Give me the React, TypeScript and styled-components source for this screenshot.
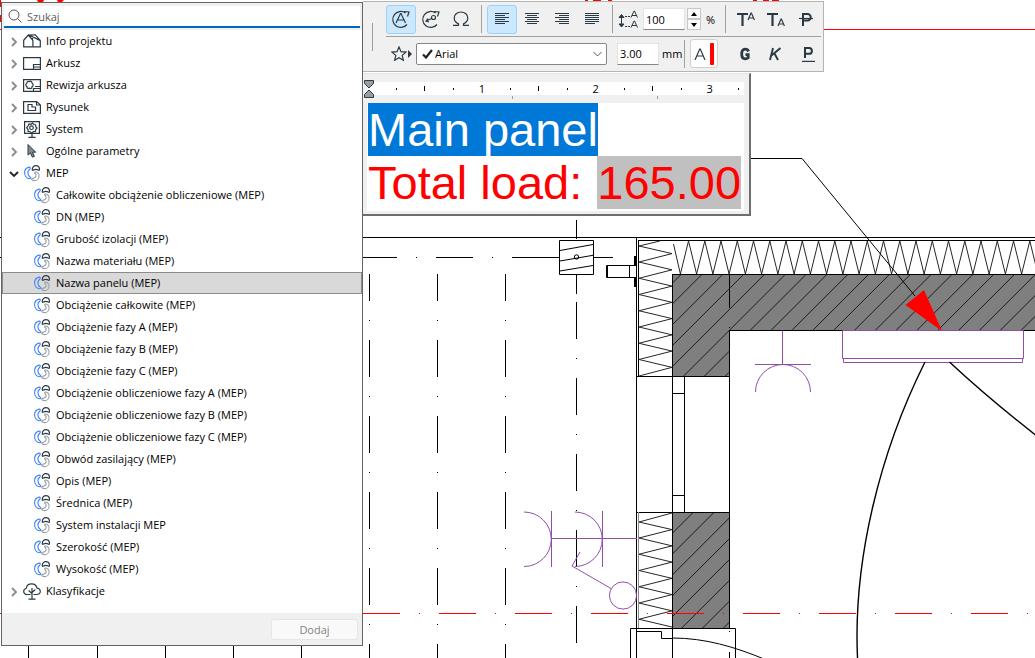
import React from "react";
import styled, { createGlobalStyle, css } from "styled-components";

const GlobalStyle = createGlobalStyle`
  *, *::before, *::after { box-sizing: border-box; }
  body {
    margin: 0;
    background: #ffffff;
    color: #000000;
    font-family: "Open Sans", "Noto Sans", sans-serif;
    font-size: 11px;
  }
  button, input, select { font: inherit; color: inherit; margin: 0; }
`;

/* ---------- page ---------- */

const Workspace = styled.main`
  position: relative;
  display: flex;
  align-items: flex-start;
  min-height: 100vh;
  padding: 1px;
  overflow: hidden;
`;

const PlanCanvas = styled.svg`
  position: absolute;
  inset: 0;
  width: 100%;
  height: 100%;
`;

const Palettes = styled.div`
  position: relative;
  display: flex;
  flex-direction: column;
  align-items: flex-start;
  gap: 1px;
`;

/* ---------- parameter browser ---------- */

const Browser = styled.section`
  position: relative;
  flex: none;
  width: 362px;
  margin-top: 1px;
  border: 1px solid #646464;
  background: #ffffff;
`;

const SearchBar = styled.div`
  padding: 3px 2px 2px;
  background: #f0f0f0;
`;

const SearchBox = styled.label`
  display: flex;
  align-items: center;
  gap: 5px;
  height: 22px;
  padding-left: 4px;
  border-bottom: 2px solid #0067c0;
  background: #ffffff;
`;

const SearchInput = styled.input`
  flex: 1;
  min-width: 0;
  padding: 0;
  border: 0;
  outline: 0;
  background: transparent;
  &::placeholder { color: #5c5c5c; opacity: 1; }
`;

const Tree = styled.ul`
  margin: 0;
  padding: 0 0 11px;
  list-style: none;
`;

const Branch = styled.ul`
  margin: 0;
  padding: 0;
  list-style: none;
`;

const Row = styled.button<{ $child?: boolean; $selected?: boolean }>`
  display: flex;
  align-items: center;
  width: 100%;
  height: 22px;
  padding: 0 0 2px ${(p) => (p.$child ? 32 : 4)}px;
  border: 0;
  background: transparent;
  text-align: left;
  white-space: nowrap;
  ${(p) =>
    p.$selected &&
    css`
      background: #d9d9d9;
      box-shadow: inset 0 0 0 1px #8c8c8c;
    `}
`;

const ChevronSlot = styled.span`
  display: flex;
  justify-content: center;
  width: 15px;
  margin-right: 2px;
  padding-top: 4px;
`;

const IconSlot = styled.span<{ $child?: boolean }>`
  display: flex;
  justify-content: center;
  width: ${(p) => (p.$child ? 16 : 18)}px;
  margin-right: ${(p) => (p.$child ? 6 : 5)}px;
  padding-top: 3px;
`;

const Footer = styled.footer`
  display: flex;
  justify-content: flex-end;
  padding: 6px 4px 5px;
  background: #f0f0f0;
`;

const AddButton = styled.button`
  width: 87px;
  height: 21px;
  padding: 0;
  border: 1px solid #e6e6e6;
  border-radius: 3px;
  background: #f9f9f9;
  &:disabled { color: #838383; }
`;

/* ---------- text toolbar ---------- */

const Toolbar = styled.section`
  display: flex;
  align-items: stretch;
  padding-right: 2px;
  border: 1px solid #b4b4b4;
  border-left: 0;
  background: #f0f0f0;
`;

const Grip = styled.div`
  width: 1px;
  margin: 21px 13px 20px 9px;
  background: #a0a0a0;
`;

const ToolRows = styled.div``;

const ToolRow = styled.div`
  display: flex;
  align-items: center;
  height: 34px;
  & + & {
    height: 35px;
    padding-bottom: 1px;
    border-top: 1px solid #a0a0a0;
  }
`;

const ToolButton = styled.button<{ $active?: boolean }>`
  display: flex;
  align-items: center;
  justify-content: center;
  width: 30px;
  height: 29px;
  padding: 0;
  border: 1px solid ${(p) => (p.$active ? "#99d1ff" : "transparent")};
  border-radius: 3px;
  background: ${(p) => (p.$active ? "#cce8ff" : "transparent")};
`;

const ColorButton = styled(ToolButton)`
  width: 28px;
  gap: 4px;
  margin-right: 12px;
  border-color: #d0d0d0;
  background: #fdfdfd;
`;

const Divider = styled.div`
  width: 1px;
  height: 28px;
  margin: 0 5px;
  background: #a0a0a0;
`;

const NumberField = styled.input`
  width: 42px;
  height: 22px;
  padding: 0 0 0 2px;
  border: 1px solid #e3e3e3;
  border-bottom-color: #868686;
  background: #ffffff;
  outline: 0;
`;

const Spinner = styled.div`
  display: flex;
  flex-direction: column;
  margin: 0 5px 0 2px;
`;

const SpinButton = styled.button`
  display: flex;
  align-items: center;
  justify-content: center;
  width: 14px;
  height: 11px;
  padding: 0;
  border: 1px solid #c8c8c8;
  background: #fbfbfb;
`;

const Unit = styled.span<{ $width: number; $gap?: number }>`
  width: ${(p) => p.$width}px;
  margin-left: ${(p) => p.$gap ?? 0}px;
`;

const FavoriteButton = styled(ToolButton)`
  gap: 1px;
`;

const FontPicker = styled.label`
  display: flex;
  align-items: center;
  gap: 2px;
  width: 191px;
  height: 22px;
  margin-right: 10px;
  padding: 0 4px 0 5px;
  border: 1px solid #868686;
  border-radius: 2px;
  background: #ffffff;
`;

const FontSelect = styled.select`
  flex: 1;
  min-width: 0;
  padding: 0;
  border: 0;
  outline: 0;
  appearance: none;
  background: transparent;
`;

/* ---------- text editor ---------- */

const Editor = styled.section`
  width: 388px;
  padding: 8px 5px 3px 4px;
  border-top: 1px solid #e4e4e4;
  border-right: 2px solid #6e6e6e;
  border-bottom: 2px solid #6e6e6e;
  background: #f0f0f0;
`;

const Ruler = styled.div`
  display: flex;
  height: 13px;
  padding-right: 6px;
  background: #ffffff;
`;

const RulerStep = styled.div`
  display: flex;
  flex: 1;
  align-items: center;
  justify-content: flex-end;
`;

const RulerMark = styled.span`
  display: flex;
  justify-content: center;
  width: 8px;
  margin-right: -4px;
  line-height: 13px;
`;

const Tick = styled.i<{ $tall?: boolean }>`
  width: 1px;
  height: ${(p) => (p.$tall ? 5 : 2)}px;
  background: #000000;
`;

const IndentMarker = styled.svg`
  flex: none;
  align-self: center;
  margin: 0 -6px 0 -3px;
  overflow: visible;
`;

const TabStops = styled.div`
  display: flex;
  gap: 144px;
  height: 8px;
  padding: 1px 0 0 145px;
`;

const TabStop = styled.i`
  width: 1px;
  height: 3px;
  background: #a0a0a0;
`;

const TextArea = styled.div`
  padding: 0 1px 2px;
  background: #ffffff;
  color: #ff0000;
  font-family: "Liberation Sans", Arial, sans-serif;
  font-size: 47px;
  line-height: 53px;
  white-space: pre;
  outline: 0;
`;

const TextLine = styled.div`
  display: flex;
  gap: 2px;
  height: 53px;
`;

const Selected = styled.span`
  background: #0078d7;
  color: #ffffff;
`;

const Autotext = styled.span`
  background: #c0c0c0;
`;

/* ---------- icons ---------- */

const INK = "#2b3a42";

const Svg = ({ w, h, children }: { w: number; h: number; children: React.ReactNode }) => (
  <svg width={w} height={h} viewBox={`0 0 ${w} ${h}`} fill="none" stroke={INK} strokeWidth="1.2" aria-hidden="true">
    {children}
  </svg>
);

const Chevron = ({ open }: { open?: boolean }) =>
  open ? (
    <Svg w={10} h={8}><path d="M1 2l4 4 4-4" stroke="#222" strokeWidth="1.8" /></Svg>
  ) : (
    <Svg w={8} h={10}><path d="M2 1l4 4-4 4" stroke="#8a8a8a" strokeWidth="1.8" /></Svg>
  );

const MepIcon = () => (
  <Svg w={16} h={17}>
    <path d="M5.300 2.100C2.500 2.600.6 5 .6 7.800c0 3.200 2.200 5.700 5.100 5.900 1.200.1 1.400-1 .6-1.500C4.800 11.300 3.900 9.900 3.900 8.100c0-1.600.8-3 1.900-4.100.9-.8.5-2.100-.5-1.900z" stroke="#3f85f5" strokeWidth="1.100" />
    <path d="M8.200 4.700C8.500 2.300 9.900.7 11.900.7s3.500 1.500 3.700 3.900c0 .7-.8.9-1.300.5-1.500-.9-3.300-.9-4.800 0-.6.4-1.300.2-1.300-.4z" strokeWidth="1.200" />
    <path d="M11.100 7c2.200-.2 4 1.600 4 3.900 0 2.600-2 4.700-4.500 4.700-1.200 0-2.100-.4-2.800-1.100-.4-.5 0-1.100.6-1.100 2-.1 3.700-1.300 3.700-3.100 0-.9-.5-1.500-1.200-2-.5-.5-.4-1.200.2-1.300z" stroke="#9aa1a5" strokeWidth="1.100" />
  </Svg>
);

const icons: Record<string, React.ReactNode> = {
  project: (
    <Svg w={18} h={15}><path d="M.7 12.800V6.300L5.300 1l4.600 5.300v6.500zM5.300 1l7-.1 5 5.600v6.300H9.900M6 1l10.800 5.400M9.500 2.700v3.300" /></Svg>
  ),
  sheet: (
    <Svg w={18} h={13}><path d="M.6.6h16.800v11.800H.6zM10.500 12.400V7.500h6.900M10.500 10h6.900" /></Svg>
  ),
  revision: (
    <Svg w={18} h={13}><path d="M.6.6h16.800v11.800H.6zM10.500 12.400V9.500h6.900M12 7.500h5.400" /><path d="M4 4c0-1.500 1.400-2 2.200-1.300C7.200 1.700 9 2.300 9 4c1.500.8 1.500 3 0 3.700.2 1.700-1.600 2.400-2.700 1.400C5.200 10 3.700 9 4 7.600 2.500 6.900 2.500 4.800 4 4z" /></Svg>
  ),
  drawing: (
    <Svg w={18} h={13}><path d="M.6.6h13l3.800 3.300v8.500H.6zM13.500.6v3.400h3.900M5 3.500h4v2.500h3.500v3.500H5z" /></Svg>
  ),
  system: (
    <Svg w={18} h={17}><path d="M1.600.6h14.800v11.800H1.600zM9 12.400v3.800M5.500 16.300h7" /><circle cx="8.500" cy="6.700" r="1.800" /><path d="M5 5l1-2 2 .3L9.500 2l1.500 1.500L12.700 4l.1 2L14 7l-1.300 1.500-.2 2-2 .1L8.700 12 7 10.700l-2-.4v-2L3.700 6.800z" /></Svg>
  ),
  pointer: (
    <Svg w={18} h={17}><path d="M5 1.500v10.600l2.400-2.200 2 4.300 2-.9-2-4.100h3.300z" fill="#85898c" strokeWidth="1" /></Svg>
  ),
  mep: <MepIcon />,
  classes: (
    <Svg w={18} h={17}><path d="M4.500 11.500C2.300 11.800.7 10.400.7 8.500c0-1.700 1-2.800 2.500-3C3.500 2.600 5.900.8 8.700.8c2.700 0 4.800 1.600 5.300 4.300 1.900.2 3.300 1.600 3.300 3.400 0 2-1.700 3.200-4 3M4.500 11.500h3M10.500 11.500h3M9 5v11M5.500 16.200h7M5.600 7.500L9 10.500M12.300 6.500L9 9.500" /></Svg>
  ),
};

const AlignIcon = ({ mode }: { mode: "left" | "center" | "right" | "justify" }) => (
  <Svg w={14} h={12}>
    {[0, 2, 4, 6, 8, 10].map((y, i) => {
      const full = mode === "justify" ? i < 5 : i % 2 === 0;
      const len = full ? 14 : 10;
      const x = mode === "center" ? (14 - len) / 2 : mode === "right" ? 14 - len : 0;
      return <rect key={y} x={x} y={y} width={len} height="1" fill={INK} stroke="none" />;
    })}
  </Svg>
);

/* ---------- floor plan ---------- */

const range = (n: number) => Array.from({ length: n }, (_, i) => i);
const PURPLE = "#8f4fa8";

/* Dash-dot axis: a 37px dash, then a dot in the middle of a 39px gap. */
const AXIS = "37 19 1 19";

const zigzagUp = range(24)
  .map((i) => `L${(680.4 + i * 16.25).toFixed(1)} 274L${(688.5 + i * 16.25).toFixed(1)} 241`)
  .join("");
const zigzagSide = (top: number, n: number) =>
  range(n).map((i) => `L672 ${top + 7.6 + i * 16.25}L639 ${top + 16 + i * 16.25}`).join("");

const Plan = () => (
  <PlanCanvas aria-hidden="true" fill="none" stroke="#000" strokeWidth="1">
    <defs>
      <clipPath id="walls">
        <path d="M672 274H1400V331H730V376H672zM672 512H730V628H672z" />
      </clipPath>
    </defs>

    <g fill="#f00" stroke="none">
      <path d="M0 0h1v7H0zM0 15h1v7H0zM0 29h1v1H0zM37 0h7l-1 2h-5zM57 0h7l-2 2h-4zM585 0h3v1h-3zM593 0h8v1h-8zM608 0h4v1h-4zM753 0h4v1h-4zM763 0h6v1h-6zM772 0h7v1h-7z" />
    </g>
    <path d="M823 29.500H1400" stroke="#f00" />

    <path d="M0 237.500H1400M0 257.500H1M638 240.500H1400" />
    <path d="M360 257.500H397M416 257.500h1M436 257.500H473M492 257.500h1M512 257.500H559M594 257.500H613" />
    {[369.5, 437.5, 505.5].map((x) => (
      <path key={x} d={`M${x} 264V1200`} strokeDasharray={AXIS} />
    ))}
    <path d="M360 264H520V274H360z" fill="#fff" stroke="none" />
    <path d="M576.500 220V239M576.500 275V294M576.500 302V644" strokeDasharray={AXIS} />
    {[28.5, 97.5, 165.5, 233.5, 301.5].map((x) => (
      <path key={x} d={`M${x} 640V658`} />
    ))}

    <path d="M559.500 240.500h34v34h-34z" fill="#fff" />
    <path d="M560 250.500L593 244.500M560 261L593 255.300M560 271L593 265.500" />
    <circle cx="576.500" cy="257" r="2.200" />
    <path d="M636 265.500H606.500V277.500H636M607.500 265V278M629.500 265V278" />
    <path d="M634 256h3v10h-3zM634 278h3v9h-3z" fill="#000" stroke="none" />

    <g clipPath="url(#walls)">
      <path d="M672 274H1400V331H730V376H672zM672 512H730V628H672z" fill="#7f7f7f" stroke="none" />
      {range(46).map((i) => {
        const sum = 955.5 + i * 20.84;
        return <path key={i} d={`M${sum - 270} 270L${sum - 640} 640`} stroke="#1c1c1c" />;
      })}
    </g>
    <path d="M672.500 376V274.500H1400M729.500 274V308M729.500 327v1M1400 330.500H729.500V512M636 376.500H729" />
    <path d="M636.500 237V658M638.500 240V376M672.500 376V512M684.500 376V512M672 393.500h12M672 495.500h12" />
    <path d="M636 512.500H729.500V628M672.500 512V658M630.500 658V628.500H735.500V658M636 631.500H661.500V638.500H672M729.500 631v1M729.500 652V658" />
    <path d="M638.500 512V628" stroke="#8a8a8a" />
    <g stroke="#262626">
      <path d={`M660 241L639 246${zigzagSide(246, 8).replace(/L639 [\d.]+$/, "L639 376")}`} />
      <path d={`M672 513L639 522${zigzagSide(522, 6)}L672 627`} />
      <path d={`M673.500 244${zigzagUp}`} />
    </g>
    <path d="M672.500 638C705 638 735 647 764 659" />

    <path d="M363 613.500H1400" stroke="#f00" strokeDasharray={AXIS} />
    <path d="M0 613.500h1" stroke="#f00" />

    <g stroke={PURPLE}>
      <path d="M842.500 330.500H1023.500V358.500H842.500zM843.500 358.500V362.500H1022.500V358.500" />
      <path d="M782.500 331V364M755 364.500H811M755.500 392A27.200 27.200 0 0 1 810.500 392" />
      <path d="M551.500 511V567M602.500 511V567M551 538.500H637" />
      <path d="M524 512A27.200 27.200 0 0 1 524 566.500M575 512A27.200 27.200 0 0 1 575 566.500" />
      <path d="M580 552L572 566L611 588.500" />
      <circle cx="623" cy="595.500" r="13.600" />
    </g>

    <path d="M925 362C880 452 853 560 857.500 658M949.500 362Q988 398 1040 438.500" strokeWidth="1.400" />
    <path d="M751 158.500H802L915 296" />
    <path d="M942 331L924 290L905.500 305z" fill="#f00" stroke="none" />
  </PlanCanvas>
);

/* ---------- data ---------- */

type Node = { label: string; icon: string; children?: string[] };

const tree: Node[] = [
  { label: "Info projektu", icon: "project" },
  { label: "Arkusz", icon: "sheet" },
  { label: "Rewizja arkusza", icon: "revision" },
  { label: "Rysunek", icon: "drawing" },
  { label: "System", icon: "system" },
  { label: "Ogólne parametry", icon: "pointer" },
  {
    label: "MEP",
    icon: "mep",
    children: [
      "Całkowite obciążenie obliczeniowe (MEP)",
      "DN (MEP)",
      "Grubość izolacji (MEP)",
      "Nazwa materiału (MEP)",
      "Nazwa panelu (MEP)",
      "Obciążenie całkowite (MEP)",
      "Obciążenie fazy A (MEP)",
      "Obciążenie fazy B (MEP)",
      "Obciążenie fazy C (MEP)",
      "Obciążenie obliczeniowe fazy A (MEP)",
      "Obciążenie obliczeniowe fazy B (MEP)",
      "Obciążenie obliczeniowe fazy C (MEP)",
      "Obwód zasilający (MEP)",
      "Opis (MEP)",
      "Średnica (MEP)",
      "System instalacji MEP",
      "Szerokość (MEP)",
      "Wysokość (MEP)",
    ],
  },
  { label: "Klasyfikacje", icon: "classes" },
];

const SELECTED = "Nazwa panelu (MEP)";

/* ---------- parts ---------- */

const ParameterBrowser = () => (
  <Browser>
    <SearchBar>
      <SearchBox>
        <Svg w={14} h={14}><circle cx="6" cy="6" r="5" stroke="#555" strokeWidth="1" /><path d="M9.600 9.600L13.500 13.500" stroke="#555" strokeWidth="1" /></Svg>
        <SearchInput type="text" placeholder="Szukaj" aria-label="Szukaj" />
      </SearchBox>
    </SearchBar>
    <Tree>
      {tree.map((node) => (
        <li key={node.label}>
          <Row type="button" aria-expanded={!!node.children}>
            <ChevronSlot><Chevron open={!!node.children} /></ChevronSlot>
            <IconSlot>{icons[node.icon]}</IconSlot>
            {node.label}
          </Row>
          {node.children && (
            <Branch>
              {node.children.map((label) => (
                <li key={label}>
                  <Row type="button" $child $selected={label === SELECTED}>
                    <IconSlot $child><MepIcon /></IconSlot>
                    {label}
                  </Row>
                </li>
              ))}
            </Branch>
          )}
        </li>
      ))}
    </Tree>
    <Footer>
      <AddButton type="button" disabled>Dodaj</AddButton>
    </Footer>
  </Browser>
);

const TextToolbar = () => (
  <Toolbar>
    <Grip />
    <ToolRows>
      <ToolRow>
        <ToolButton type="button" $active aria-label="Obracaj tekst">
          <Svg w={20} h={20}><path d="M14.500 4A8 8 0 1 0 16 15.500M13 2.500l5 .5-1.500 4.500" /><path d="M5 14l4.500-9.500h.5L14.500 14M6.500 11h6.500" /></Svg>
        </ToolButton>
        <ToolButton type="button" aria-label="Obracaj znacznik">
          <Svg w={20} h={20}><path d="M14.500 4A8 8 0 1 0 16 15.500M13 2.500l5 .5-1.500 4.500" /><circle cx="12.500" cy="8.500" r="2" /><path d="M10.500 9.500L5.500 12M7 9.500l-2 2.700 3 .8" /></Svg>
        </ToolButton>
        <ToolButton type="button" aria-label="Wstaw symbol">
          <Svg w={18} h={16}><path d="M1 14.400h5.500v-1.500C3.800 11.600 2.200 9.500 2.200 7c0-3.500 2.900-6 6.800-6s6.800 2.500 6.800 6c0 2.500-1.600 4.600-4.300 5.900v1.500H17" /></Svg>
        </ToolButton>
        <Divider />
        <ToolButton type="button" $active aria-label="Do lewej"><AlignIcon mode="left" /></ToolButton>
        <ToolButton type="button" aria-label="Do środka"><AlignIcon mode="center" /></ToolButton>
        <ToolButton type="button" aria-label="Do prawej"><AlignIcon mode="right" /></ToolButton>
        <ToolButton type="button" aria-label="Wyjustuj"><AlignIcon mode="justify" /></ToolButton>
        <Divider />
        <Svg w={25} h={18}>
          <path d="M3.500 6v9M1 7.500l2.500-3 2.500 3zM1 14l2.500 3L6 14z" fill={INK} strokeWidth="1" />
          <path d="M7 6.500h5M7 16.500h5" strokeDasharray="2 1" strokeWidth="1" />
          <path d="M13 7.500L16 1h.5l3 6.500M14 5.500h4.500M13 17.500L16 11h.5l3 6.500M14 15.500h4.500" strokeWidth="1" />
        </Svg>
        <NumberField type="text" defaultValue="100" aria-label="Interlinia" />
        <Spinner>
          <SpinButton type="button" aria-label="Zwiększ"><Svg w={6} h={4}><path d="M0 4h6L3 0z" fill="#000" stroke="none" /></Svg></SpinButton>
          <SpinButton type="button" aria-label="Zmniejsz"><Svg w={6} h={4}><path d="M0 0h6L3 4z" fill="#000" stroke="none" /></Svg></SpinButton>
        </Spinner>
        <Unit $width={14}>%</Unit>
        <Divider />
        <ToolButton type="button" aria-label="Indeks górny">
          <Svg w={20} h={16}><path d="M1 3h11M6.500 3v12" strokeWidth="2.200" /><path d="M12 9l3-7h.4l3 7M13 7h5" /></Svg>
        </ToolButton>
        <ToolButton type="button" aria-label="Indeks dolny">
          <Svg w={20} h={16}><path d="M1 3h11M6.500 3v12" strokeWidth="2.200" /><path d="M12 15l3-7h.4l3 7M13 13h5" /></Svg>
        </ToolButton>
        <ToolButton type="button" aria-label="Przekreślenie">
          <Svg w={14} h={16}><path d="M4 15V3h4.500a3 3 0 0 1 0 6.500H4" strokeWidth="2" /><path d="M0 7.500h14" /></Svg>
        </ToolButton>
      </ToolRow>
      <ToolRow>
        <FavoriteButton type="button" aria-label="Ulubione">
          <Svg w={16} h={15}><path d="M8 1l2 4.700 5 .4-3.800 3.300 1.200 4.900L8 11.700l-4.400 2.600 1.200-4.900L1 6.100l5-.4z" /></Svg>
          <Svg w={4} h={8}><path d="M0 0v8l4-4z" fill={INK} stroke="none" /></Svg>
        </FavoriteButton>
        <FontPicker>
          <Svg w={11} h={10}><path d="M1 5.500L4 8.500L10 1" stroke="#222" strokeWidth="2.200" /></Svg>
          <FontSelect aria-label="Czcionka" defaultValue="Arial"><option>Arial</option></FontSelect>
          <Svg w={9} h={6}><path d="M.5 1l4 4 4-4" stroke="#555" strokeWidth="1" /></Svg>
        </FontPicker>
        <NumberField type="text" defaultValue="3.00" aria-label="Wysokość tekstu" />
        <Unit $width={17} $gap={3}>mm</Unit>
        <Divider />
        <ColorButton type="button" aria-label="Kolor tekstu">
          <Svg w={12} h={12}><path d="M1 12L5.700 1h.6L11 12M2.500 8h7" /></Svg>
          <Svg w={4} h={22}><rect width="4" height="22" rx="1" fill="#f00" stroke="none" /></Svg>
        </ColorButton>
        <ToolButton type="button" aria-label="Pogrubienie">
          <Svg w={12} h={14}><path d="M9.500 4.500C9 3 8 2.200 6.200 2.200 3.800 2.200 2.700 4 2.700 7s1.100 4.800 3.500 4.800c1.200 0 2.200-.3 3-1V7.700H6.500" strokeWidth="2.800" /></Svg>
        </ToolButton>
        <ToolButton type="button" aria-label="Kursywa">
          <Svg w={14} h={14}><path d="M5 1L2 13M12.500 1L3.500 8.500M6.500 6.500L10 13" strokeWidth="1.900" /></Svg>
        </ToolButton>
        <ToolButton type="button" aria-label="Podkreślenie">
          <Svg w={20} h={16}><path d="M10 12V2h4a2.800 2.800 0 0 1 0 5.800h-4" strokeWidth="2" /><path d="M7 15.400h13" /></Svg>
        </ToolButton>
      </ToolRow>
    </ToolRows>
  </Toolbar>
);

const TextEditor = () => (
  <Editor>
    <Ruler>
      <IndentMarker width="10" height="18" viewBox="0 0 10 18" fill="#9a9da0" stroke={INK}>
        <path d="M.5.500h9v3L5 8 .5 3.500zM.5 17.500h9v-3L5 10 .5 14.500z" />
      </IndentMarker>
      {range(13).map((i) => (
        <RulerStep key={i}>
          <RulerMark>{i % 4 === 3 ? (i + 1) / 4 : <Tick $tall={i % 4 === 1} />}</RulerMark>
        </RulerStep>
      ))}
    </Ruler>
    <TabStops><TabStop /><TabStop /></TabStops>
    <TextArea role="textbox" aria-multiline="true" aria-label="Tekst" contentEditable suppressContentEditableWarning>
      <TextLine><Selected>Main panel</Selected></TextLine>
      <TextLine><span>Total load: </span><Autotext>165.00</Autotext></TextLine>
    </TextArea>
  </Editor>
);

export default function App() {
  return (
    <>
      <GlobalStyle />
      <Workspace>
        <Plan />
        <ParameterBrowser />
        <Palettes>
          <TextToolbar />
          <TextEditor />
        </Palettes>
      </Workspace>
    </>
  );
}
